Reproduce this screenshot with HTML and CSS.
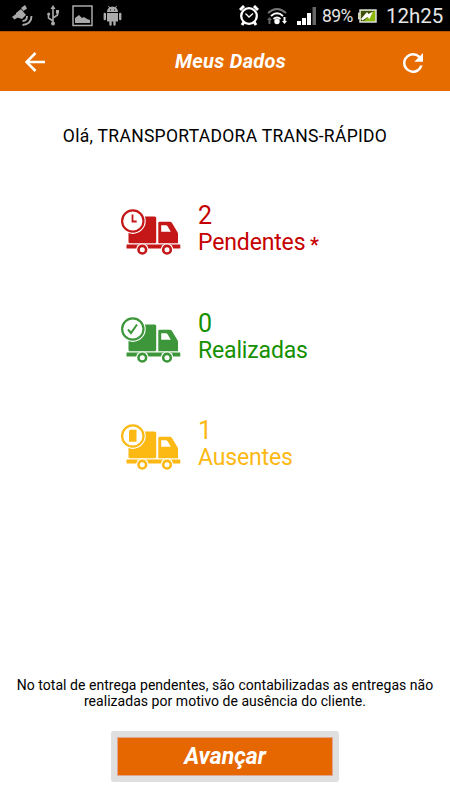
FILE: index.html
```html
<!DOCTYPE html>
<html lang="pt-BR">
<head>
    <meta charset="UTF-8">
    <meta name="viewport" content="width=device-width, initial-scale=1.0">
    <title>Meus Dados</title>
    <link rel="stylesheet" href="styles.css">
</head>
<body>

    <!-- Barra de status -->
    <div class="status-bar">
        <div class="status-left">
            <svg width="22" height="22" viewBox="0 0 22 22">
                <path d="M4 8l5-4 5 6-4 4-6-2z" fill="#aaa"/>
                <path d="M0 12l4-3 2.500 3-4 2.500zM9 3l4-3 2 3.500-3.500 2.500z" fill="#aaa"/>
                <path d="M10.500 16q4.500 0 4.500-5M10.500 20q9-1 9-9" fill="none" stroke="#aaa" stroke-width="1.900"/>
            </svg>
            <svg width="12" height="22" viewBox="0 0 12 22">
                <path d="M6 3v16M6 16l-4.500-3V9M6 13l4.500-3V7" fill="none" stroke="#aaa" stroke-width="1.600"/>
                <path d="M6 0l2.500 4h-5zM9 5h3v3.500H9z" fill="#aaa"/>
                <circle cx="6" cy="18.500" r="2" fill="#aaa"/>
                <circle cx="1.700" cy="9" r="1.500" fill="#aaa"/>
            </svg>
            <svg width="21" height="22" viewBox="0 0 21 22">
                <rect x="1" y="1" width="19" height="19.500" fill="none" stroke="#aaa" stroke-width="1.500"/>
                <path d="M3 18v-5l4-3 3 3 2-1 3 2 3 1v3z" fill="#aaa"/>
            </svg>
            <svg class="android" width="19" height="22" viewBox="0 0 19 22">
                <path d="M4 7a5.500 5.500 0 0 1 11 0zM4 8h11v8.500H4z" fill="#aaa"/>
                <path d="M5.500 1l1.500 2.500M13.500 1L12 3.500" stroke="#aaa"/>
                <path d="M1.800 9v5M17.200 9v5M7.500 16v3.500M11.500 16v3.500" stroke="#aaa" stroke-width="2.400" stroke-linecap="round"/>
                <path d="M7 5h1M11 5h1" stroke="#000"/>
            </svg>
        </div>
        <div class="status-right">
            <svg class="alarm" width="20" height="22" viewBox="0 0 20 22">
                <circle cx="10" cy="11" r="7.800" fill="none" stroke="#fff" stroke-width="2.300"/>
                <path d="M1 5l4-4M19 5l-4-4M3 20l2-3M17 20l-2-3" stroke="#fff" stroke-width="3"/>
                <path d="M6.500 8.500L10 12l4-3.500" fill="none" stroke="#fff" stroke-width="1.300"/>
            </svg>
            <svg class="wifi" width="20" height="18" viewBox="0 0 20 18">
                <path d="M1 6q9-8 18 0" fill="none" stroke="#777" stroke-width="1.800"/>
                <path d="M4 9q6-5.500 12 0M6.500 12q3.500-3 7 0" fill="none" stroke="#fff" stroke-width="1.800"/>
                <circle cx="10" cy="14.500" r="2.700" fill="#fff"/>
                <path d="M2.500 10l2.500 3H3.500v4h-2v-4H0z" fill="#666"/>
                <path d="M16.500 10h2v4H20l-2.500 3-2.500-3h1.500z" fill="#fff"/>
            </svg>
            <svg class="signal" width="20" height="18" viewBox="0 0 20 18">
                <path d="M0 14h4v4H0zM5 11h4v7H5zM10 6h4v12h-4z" fill="#fff"/>
                <path d="M15.500 0H19v18h-3.500z" fill="#666"/>
            </svg>
            <span class="percent">89%</span>
            <svg class="battery" width="19" height="14" viewBox="0 0 19 14">
                <path d="M2 1h16v12H2zM0 4.500h2v5H0z" fill="#8cb80e" stroke="#ddd" stroke-width="1.500"/>
                <path d="M3 12V2h13L6 12z" fill="#40510b"/>
                <path d="M3 10l6-7 1.500 2L15 2.500 11.500 10 9.500 8 4.500 11.500z" fill="#fff"/>
            </svg>
            <span class="clock">12h25</span>
        </div>
    </div>

    <header>
        <svg width="20" height="20" viewBox="0 0 20 20">
            <path d="M20 10H2M10.500 1L1.500 10l9 9" fill="none" stroke="#fff" stroke-width="2.500"/>
        </svg>
        <h1>Meus Dados</h1>
        <svg class="refresh" width="20" height="20" viewBox="4 4 16 16">
            <path d="M17.650 6.350A7.960 7.960 0 0 0 12 4a8 8 0 1 0 7.730 10h-2.080A6 6 0 1 1 12 6c1.660 0 3.140.690 4.220 1.780L13 11h7V4z" fill="#fff"/>
        </svg>
    </header>

    <main>
        <p class="greeting">Olá, TRANSPORTADORA TRANS-RÁPIDO</p>

        <svg class="symbols">
            <symbol id="truck" viewBox="0 0 62 48">
                <rect x="8.500" y="8.500" width="27.700" height="26.800" rx="1.500"/>
                <path fill-rule="evenodd" d="M39.500 13.700h10.300q1.400 0 2.200 1.200l5.500 9.300q.5.800.5 1.800v9.300H38.300V15q0-1.300 1.200-1.300zM41.200 17.200v6.500h9.600l-3.200-5.500q-.6-1-1.700-1z"/>
                <rect x="6.500" y="36.400" width="53.800" height="4" rx=".5"/>
                <circle cx="22.300" cy="41.700" r="6.300" fill="#fff"/>
                <circle cx="47" cy="41.700" r="6.300" fill="#fff"/>
                <circle cx="22.300" cy="41.700" r="3.800" fill="#fff" stroke="currentColor" stroke-width="2.600"/>
                <circle cx="47" cy="41.700" r="3.800" fill="#fff" stroke="currentColor" stroke-width="2.600"/>
                <circle cx="12.800" cy="13" r="12.900" fill="#fff"/>
                <circle cx="12.800" cy="13" r="10.700" fill="#fff" stroke="currentColor" stroke-width="2.200"/>
            </symbol>
        </svg>

        <!-- Totais de entregas -->
        <div class="delivery pending">
            <svg class="truck" viewBox="0 0 62 48">
                <use href="#truck"/>
                <path d="M12.500 6.500v7h4.200" fill="none" stroke="currentColor" stroke-width="1.800"/>
            </svg>
            <div class="info">
                <span>2</span>
                <span>Pendentes <small>*</small></span>
            </div>
        </div>
        <div class="delivery done">
            <svg class="truck" viewBox="0 0 62 48">
                <use href="#truck"/>
                <path d="M8 13.500l3 3.500 6-8.500" fill="none" stroke="currentColor" stroke-width="2"/>
            </svg>
            <div class="info">
                <span>0</span>
                <span>Realizadas</span>
            </div>
        </div>
        <div class="delivery absent">
            <svg class="truck" viewBox="0 0 62 48">
                <use href="#truck"/>
                <path d="M10 6.800h6.500v12H9V8z"/>
            </svg>
            <div class="info">
                <span>1</span>
                <span>Ausentes</span>
            </div>
        </div>
    </main>

    <footer>
        <p>No total de entrega pendentes, são contabilizadas as entregas não<br>realizadas por motivo de ausência do cliente.</p>
        <button>Avançar</button>
    </footer>

</body>
</html>
```
FILE: styles.css
```css
* {
    margin: 0;
    padding: 0;
    box-sizing: border-box;
}

body {
    font-family: Roboto, sans-serif;
    background-color: #ffffff;
    color: #000000;
    width: 450px;
    height: 800px;
    display: flex;
    flex-direction: column;
    overflow: hidden;
}

svg {
    flex-shrink: 0;
}

/* Status Bar */
.status-bar {
    height: 31px;
    background-color: #000000;
    display: flex;
    justify-content: space-between;
    padding: 5px 8px 0 12px;
}

.status-left {
    display: flex;
    gap: 13px;
}

.android {
    margin-left: -3px;
}

.status-right {
    display: flex;
    color: #e6e6e6;
}

.wifi {
    margin: 2px 0 0 8px;
}

.signal {
    margin: 2px 0 0 10px;
}

.percent {
    font-size: 17.5px;
    line-height: 23px;
    margin-left: 5px;
    width: 31px;
    letter-spacing: -0.6px;
}

.battery {
    margin: 4px 0 0 5px;
}

.clock {
    font-size: 20.5px;
    line-height: 22px;
    margin-left: 9px;
    width: 56px;
}

header {
    height: 60px;
    background-color: #e66c00;
    border-top: 1px solid #b95600;
    display: flex;
    align-items: center;
    padding: 0 27px 0 25px;
}

header h1 {
    flex: 1;
    color: white;
    font-size: 20px;
    font-style: italic;
    font-weight: bold;
    letter-spacing: 0.3px;
    line-height: 24px;
    padding-left: 130px;
    margin-bottom: 2px;
}

.refresh {
    margin-top: 3px;
}

/* Deliveries */
main {
    flex: 1;
}

.greeting {
    font-size: 17.5px;
    letter-spacing: 0.3px;
    line-height: 24px;
    text-align: center;
    margin-top: 33px;
    margin-bottom: 54px;
    white-space: nowrap;
}

.symbols {
    display: none;
}

.delivery {
    display: flex;
    height: 107.5px;
    padding-left: 120px;
    fill: currentColor;
}

.truck {
    width: 62px;
    height: 48px;
    margin-top: 6px;
}

.info {
    display: flex;
    flex-direction: column;
    margin-left: 16px;
    font-size: 23px;
    letter-spacing: -0.15px;
    line-height: 27px;
}

.info span:first-child {
    font-size: 25px;
}

.info small {
    display: inline-block;
    font-size: 20px;
    font-weight: 500;
    line-height: 16px;
    margin-left: -1px;
    transform: translateY(2px);
}

.pending {
    color: #c60000;
}

.done {
    color: #159000;
}

.absent {
    color: #fcb813;
}

.pending .truck {
    color: #c51718;
}

.done .truck {
    color: #3d973a;
}

/* Footer */
footer {
    text-align: center;
}

footer p {
    font-size: 14px;
    letter-spacing: 0.04px;
    line-height: 16px;
    white-space: nowrap;
}

footer button {
    width: 228px;
    height: 51px;
    margin: 22px 0 18px;
    padding-bottom: 1px;
    border: 6px solid #dfdfdf;
    border-radius: 3px;
    background-color: #e66700;
    box-shadow: inset 0 0 0 1px #e0a590;
    color: white;
    font-family: inherit;
    font-size: 23px;
    font-style: italic;
    font-weight: bold;
}
```
